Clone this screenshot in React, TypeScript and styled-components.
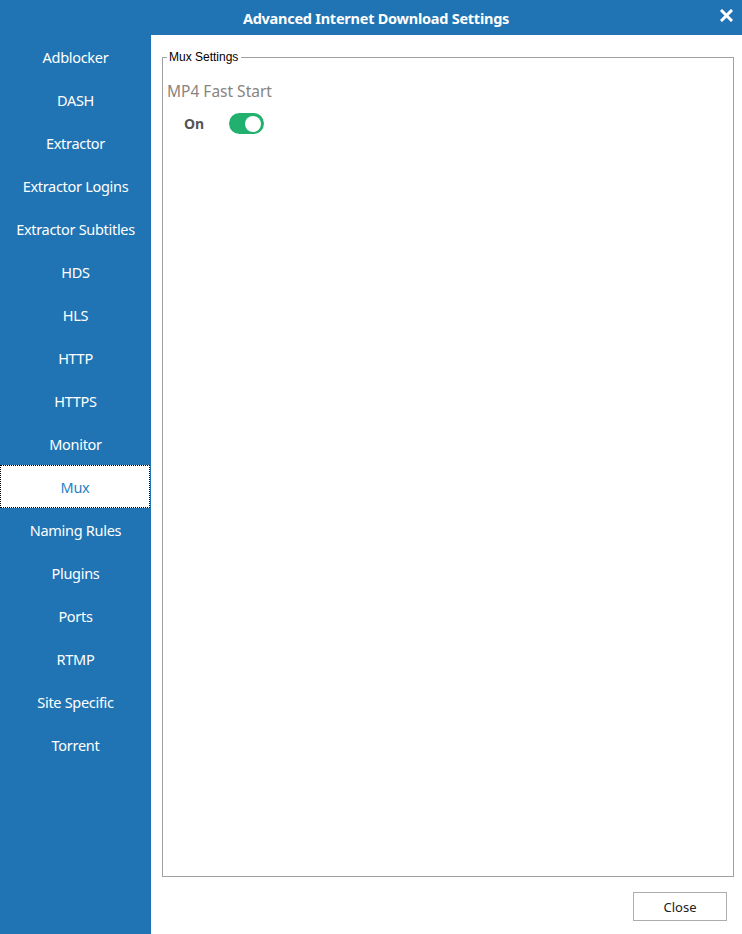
import React, { useState } from "react";
import styled, { createGlobalStyle } from "styled-components";

const Global = createGlobalStyle`
  html, body { margin: 0; padding: 0; background: #ffffff; }
  body { font-family: "Noto Sans", "Open Sans", sans-serif; }
  * { box-sizing: border-box; }
`;

const Window = styled.div`
  width: 742px;
  height: 934px;
  display: flex;
  flex-direction: column;
  background: #ffffff;
  overflow: hidden;
`;

const TitleBar = styled.div`
  height: 35px;
  flex: none;
  background: #2074b3;
  color: #ffffff;
  display: flex;
  align-items: center;
  justify-content: center;
  padding-left: 10px;
  position: relative;
  font-family: "Noto Sans", sans-serif;
  font-weight: 700;
  font-size: 14.5px;
  letter-spacing: -0.25px;
`;

const CloseX = styled.button`
  position: absolute;
  right: 8px;
  top: 7px;
  width: 16px;
  height: 16px;
  padding: 0;
  border: none;
  background: transparent;
  display: flex;
  align-items: center;
  justify-content: center;
  cursor: pointer;
`;

const Body = styled.div`
  flex: 1;
  display: flex;
  min-height: 0;
`;

const Sidebar = styled.nav`
  width: 151px;
  flex: none;
  background: #2074b3;
  display: flex;
  flex-direction: column;
`;

const NavItem = styled.div<{ $active?: boolean }>`
  height: 43px;
  display: flex;
  align-items: center;
  justify-content: center;
  font-size: 14.5px;
  letter-spacing: -0.3px;
  color: ${(p) => (p.$active ? "#2a7fc4" : "#ffffff")};
  background: ${(p) => (p.$active ? "#ffffff" : "transparent")};
  border: ${(p) => (p.$active ? "1px dotted #000000" : "1px solid transparent")};
  margin-right: ${(p) => (p.$active ? "1px" : "0")};
  cursor: pointer;
`;

const Main = styled.div`
  flex: 1;
  display: flex;
  flex-direction: column;
  padding: 15px 8px 13px 11px;
`;

const Group = styled.fieldset`
  flex: 1;
  margin: 0;
  border: 1px solid #a0a0a0;
  padding: 12px 4px 0 4px;
  min-height: 0;
`;

const Legend = styled.legend`
  font-family: "Liberation Sans", Arial, sans-serif;
  font-size: 12px;
  color: #000000;
  padding: 0 3px 0 2px;
  margin-left: 0;
`;

const FieldLabel = styled.div`
  font-size: 15.5px;
  color: #8a847e;
  letter-spacing: 0;
  margin-top: 4px;
`;

const ToggleRow = styled.div`
  display: flex;
  align-items: center;
  gap: 24px;
  margin-top: 11px;
  padding-left: 17px;
`;

const ToggleText = styled.span`
  font-weight: 700;
  font-size: 14px;
  color: #555555;
  width: 21px;
`;

const Switch = styled.button<{ $on: boolean }>`
  width: 35px;
  height: 21px;
  border-radius: 11px;
  border: none;
  padding: 0;
  background: ${(p) => (p.$on ? "#21b06d" : "#bdbdbd")};
  position: relative;
  cursor: pointer;
`;

const Knob = styled.span<{ $on: boolean }>`
  position: absolute;
  top: 2.5px;
  left: ${(p) => (p.$on ? "16px" : "2.5px")};
  width: 16px;
  height: 16px;
  border-radius: 50%;
  background: #ffffff;
`;

const Footer = styled.div`
  display: flex;
  justify-content: flex-end;
  padding-top: 15px;
  padding-right: 7px;
`;

const Button = styled.button`
  width: 94px;
  height: 29px;
  background: #ffffff;
  border: 1px solid #adadad;
  font-family: "Noto Sans", sans-serif;
  font-size: 13px;
  color: #222222;
  cursor: pointer;
`;

const items = [
  "Adblocker",
  "DASH",
  "Extractor",
  "Extractor Logins",
  "Extractor Subtitles",
  "HDS",
  "HLS",
  "HTTP",
  "HTTPS",
  "Monitor",
  "Mux",
  "Naming Rules",
  "Plugins",
  "Ports",
  "RTMP",
  "Site Specific",
  "Torrent",
];

export default function App() {
  const [active, setActive] = useState("Mux");
  const [on, setOn] = useState(true);
  return (
    <>
      <Global />
      <Window>
        <TitleBar>
          Advanced Internet Download Settings
          <CloseX aria-label="close">
            <svg width="13" height="13" viewBox="0 0 13 13">
              <path d="M2 2 L11 11 M11 2 L2 11" stroke="#ffffff" strokeWidth="3" strokeLinecap="square" />
            </svg>
          </CloseX>
        </TitleBar>
        <Body>
          <Sidebar>
            {items.map((it) => (
              <NavItem key={it} $active={it === active} onClick={() => setActive(it)}>
                {it}
              </NavItem>
            ))}
          </Sidebar>
          <Main>
            <Group>
              <Legend>Mux Settings</Legend>
              <FieldLabel>MP4 Fast Start</FieldLabel>
              <ToggleRow>
                <ToggleText>{on ? "On" : "Off"}</ToggleText>
                <Switch $on={on} onClick={() => setOn(!on)}>
                  <Knob $on={on} />
                </Switch>
              </ToggleRow>
            </Group>
            <Footer>
              <Button>Close</Button>
            </Footer>
          </Main>
        </Body>
      </Window>
    </>
  );
}
